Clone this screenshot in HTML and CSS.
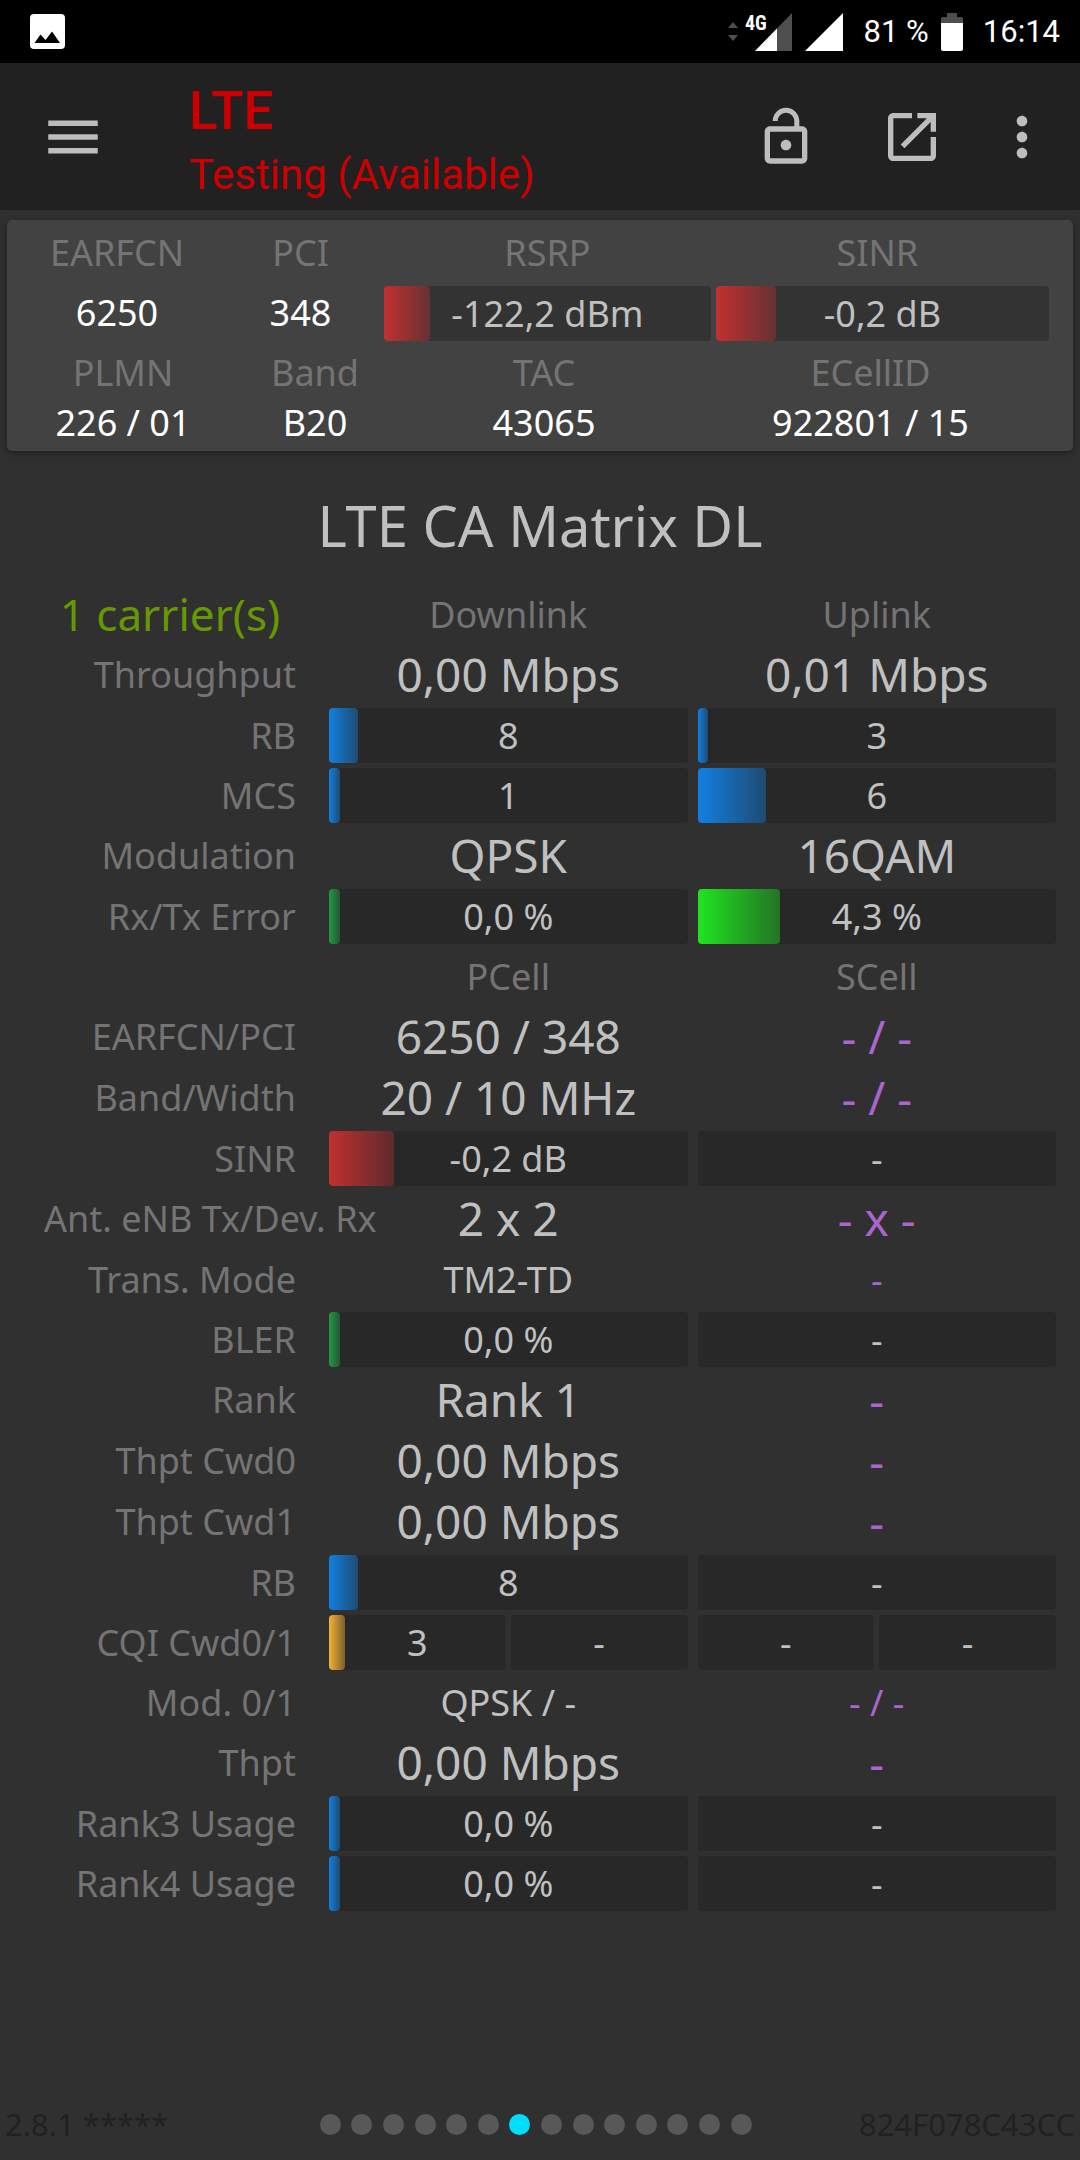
FILE: index.html
```html
<!DOCTYPE html>
<html lang="en">
<head>
  <meta charset="UTF-8">
  <meta name="viewport" content="width=device-width, initial-scale=1.0">
  <title>LTE CA Matrix DL</title>
  <link rel="stylesheet" href="styles.css">
</head>
<body>
  <!-- Status bar -->
  <div class="status-bar">
    <svg class="status-photo" viewBox="0 0 35 35">
      <rect width="35" height="35" rx="4" fill="#fff"/>
      <path d="M4.500 29L10.500 20.500L15.500 26L22 17.500L30 29z" fill="#000"/>
    </svg>
    <div class="status-right">
      <svg class="signal-data" viewBox="0 0 66 40">
        <path d="M1 16l5-6 5 6zM1 23h10l-5 6z" fill="#4e4e4e"/>
        <path d="M65 1v38H28z" fill="#4e4e4e"/>
        <path d="M50 16.500V39H28z" fill="#fff"/>
        <text x="18" y="18" class="signal-type">4G</text>
      </svg>
      <svg class="signal" viewBox="0 0 38 40"><path d="M38 1v38H0z" fill="#fff"/></svg>
      <span class="percent">81 %</span>
      <svg class="battery" viewBox="0 0 22 40">
        <path d="M6 1h10v4h4q2 0 2 2v4H0V7q0-2 2-2h4z" fill="#4e4e4e"/>
        <path d="M0 11h22v26q0 2-2 2H2q-2 0-2-2z" fill="#fff"/>
      </svg>
      <span class="clock">16:14</span>
    </div>
  </div>

  <!-- App bar -->
  <header class="app-bar">
    <button class="icon-btn menu-btn" aria-label="Menu">
      <svg viewBox="0 0 24 24"><path d="M3 18h18v-2H3v2zm0-5h18v-2H3v2zm0-7v2h18V6H3z"/></svg>
    </button>
    <div class="app-title">
      <div class="title">LTE</div>
      <div class="subtitle">Testing (Available)</div>
    </div>
    <button class="icon-btn" aria-label="Lock">
      <svg viewBox="0 0 24 24"><path d="M12 17c1.100 0 2-.9 2-2s-.9-2-2-2-2 .9-2 2 .9 2 2 2zm6-9h-1V6c0-2.760-2.240-5-5-5S7 3.240 7 6h1.900c0-1.710 1.390-3.100 3.100-3.100 1.710 0 3.100 1.390 3.100 3.100v2H6c-1.100 0-2 .9-2 2v10c0 1.100.9 2 2 2h12c1.100 0 2-.9 2-2V10c0-1.100-.9-2-2-2zm0 12H6V10h12v10z"/></svg>
    </button>
    <button class="icon-btn" aria-label="Open in new window">
      <svg viewBox="0 0 24 24"><path d="M19 19H5V5h7V3H5c-1.110 0-2 .9-2 2v14c0 1.100.89 2 2 2h14c1.100 0 2-.9 2-2v-7h-2v7zM14 3v2h3.590l-9.830 9.830 1.410 1.410L19 6.410V10h2V3h-7z"/></svg>
    </button>
    <button class="icon-btn more-btn" aria-label="More">
      <svg viewBox="0 0 24 24"><path d="M12 8c1.100 0 2-.9 2-2s-.9-2-2-2-2 .9-2 2 .9 2 2 2zm0 2c-1.100 0-2 .9-2 2s.9 2 2 2 2-.9 2-2-.9-2-2-2zm0 6c-1.100 0-2 .9-2 2s.9 2 2 2 2-.9 2-2-.9-2-2-2z"/></svg>
    </button>
  </header>

  <!-- Serving cell -->
  <section class="card">
    <table class="cell-table signal-table">
      <colgroup><col class="c-earfcn"><col class="c-pci"><col class="c-rsrp"><col></colgroup>
      <tr><th>EARFCN</th><th>PCI</th><th>RSRP</th><th>SINR</th></tr>
      <tr>
        <td>6250</td>
        <td>348</td>
        <td><div class="bar"><i class="fill red" style="width: 14%"></i><span>-122,2 dBm</span></div></td>
        <td><div class="bar"><i class="fill red" style="width: 18%"></i><span>-0,2 dB</span></div></td>
      </tr>
    </table>
    <table class="cell-table id-table">
      <colgroup><col class="c-plmn"><col class="c-band"><col class="c-tac"><col></colgroup>
      <tr><th>PLMN</th><th>Band</th><th>TAC</th><th>ECellID</th></tr>
      <tr><td>226 / 01</td><td>B20</td><td>43065</td><td>922801 / 15</td></tr>
    </table>
  </section>

  <!-- Carrier aggregation -->
  <main>
    <h1>LTE CA Matrix DL</h1>
    <div class="matrix">
      <table class="matrix-table">
        <colgroup><col class="c-label"><col><col></colgroup>
        <tr><th class="carriers">1 carrier(s)</th><th>Downlink</th><th>Uplink</th></tr>
        <tr class="big"><th>Throughput</th><td>0,00 Mbps</td><td>0,01 Mbps</td></tr>
        <tr>
          <th>RB</th>
          <td><div class="bar"><i class="fill blue" style="width: 8%"></i><span>8</span></div></td>
          <td><div class="bar"><i class="fill blue" style="width: 3%"></i><span>3</span></div></td>
        </tr>
        <tr>
          <th>MCS</th>
          <td><div class="bar"><i class="fill blue" style="width: 3%"></i><span>1</span></div></td>
          <td><div class="bar"><i class="fill blue" style="width: 19%"></i><span>6</span></div></td>
        </tr>
        <tr class="big"><th>Modulation</th><td>QPSK</td><td>16QAM</td></tr>
        <tr>
          <th>Rx/Tx Error</th>
          <td><div class="bar"><i class="fill green" style="width: 3%"></i><span>0,0 %</span></div></td>
          <td><div class="bar"><i class="fill lime" style="width: 23%"></i><span>4,3 %</span></div></td>
        </tr>
        <tr><th></th><th>PCell</th><th>SCell</th></tr>
        <tr class="big"><th>EARFCN/PCI</th><td>6250 / 348</td><td class="none">- / -</td></tr>
        <tr class="big"><th>Band/Width</th><td>20 / 10 MHz</td><td class="none">- / -</td></tr>
        <tr>
          <th>SINR</th>
          <td><div class="bar"><i class="fill red" style="width: 18%"></i><span>-0,2 dB</span></div></td>
          <td><div class="bar"><span>-</span></div></td>
        </tr>
        <tr class="big"><th>Ant. eNB Tx/Dev. Rx</th><td>2 x 2</td><td class="none">- x -</td></tr>
        <tr><th>Trans. Mode</th><td>TM2-TD</td><td class="none">-</td></tr>
        <tr>
          <th>BLER</th>
          <td><div class="bar"><i class="fill green" style="width: 3%"></i><span>0,0 %</span></div></td>
          <td><div class="bar"><span>-</span></div></td>
        </tr>
        <tr class="big"><th>Rank</th><td>Rank 1</td><td class="none">-</td></tr>
        <tr class="big"><th>Thpt Cwd0</th><td>0,00 Mbps</td><td class="none">-</td></tr>
        <tr class="big"><th>Thpt Cwd1</th><td>0,00 Mbps</td><td class="none">-</td></tr>
        <tr>
          <th>RB</th>
          <td><div class="bar"><i class="fill blue" style="width: 8%"></i><span>8</span></div></td>
          <td><div class="bar"><span>-</span></div></td>
        </tr>
        <tr>
          <th>CQI Cwd0/1</th>
          <td>
            <div class="pair">
              <div class="bar"><i class="fill orange" style="width: 9%"></i><span>3</span></div>
              <div class="bar"><span>-</span></div>
            </div>
          </td>
          <td>
            <div class="pair">
              <div class="bar"><span>-</span></div>
              <div class="bar"><span>-</span></div>
            </div>
          </td>
        </tr>
        <tr><th>Mod. 0/1</th><td>QPSK / -</td><td class="none">- / -</td></tr>
        <tr class="big"><th>Thpt</th><td>0,00 Mbps</td><td class="none">-</td></tr>
        <tr>
          <th>Rank3 Usage</th>
          <td><div class="bar"><i class="fill blue" style="width: 3%"></i><span>0,0 %</span></div></td>
          <td><div class="bar"><span>-</span></div></td>
        </tr>
        <tr>
          <th>Rank4 Usage</th>
          <td><div class="bar"><i class="fill blue" style="width: 3%"></i><span>0,0 %</span></div></td>
          <td><div class="bar"><span>-</span></div></td>
        </tr>
      </table>
    </div>
  </main>

  <footer class="footer">
    <span class="version">2.8.1 *****</span>
    <nav class="dots">
      <button aria-label="Page 1"></button>
      <button aria-label="Page 2"></button>
      <button aria-label="Page 3"></button>
      <button aria-label="Page 4"></button>
      <button aria-label="Page 5"></button>
      <button aria-label="Page 6"></button>
      <button class="active" aria-label="Page 7"></button>
      <button aria-label="Page 8"></button>
      <button aria-label="Page 9"></button>
      <button aria-label="Page 10"></button>
      <button aria-label="Page 11"></button>
      <button aria-label="Page 12"></button>
      <button aria-label="Page 13"></button>
      <button aria-label="Page 14"></button>
    </nav>
    <span class="device-id">824F078C43CC</span>
  </footer>
</body>
</html>
```

FILE: styles.css
```css
* {
  box-sizing: border-box;
}

body {
  margin: 0;
  min-height: 100vh;
  display: flex;
  flex-direction: column;
  background: #303030;
  color: #c0c0c0;
  font-family: "Noto Sans", sans-serif;
  font-size: 36px;
}

button {
  border: none;
  padding: 0;
  background: none;
  cursor: pointer;
}

svg {
  display: block;
}

/* Status bar */
.status-bar {
  display: flex;
  justify-content: space-between;
  align-items: center;
  height: 63px;
  padding: 0 20px 0 30px;
  background: #000;
  color: #fff;
  font-family: Roboto, sans-serif;
  font-size: 31px;
}

.status-photo {
  width: 35px;
  height: 35px;
}

.status-right {
  display: flex;
  align-items: center;
}

.signal-data {
  width: 66px;
  height: 40px;
}

.signal-type {
  font-family: "Roboto Condensed", Roboto, sans-serif;
  font-size: 20px;
  font-weight: bold;
  fill: #fff;
}

.signal {
  width: 38px;
  height: 40px;
  margin-left: 12px;
}

.percent {
  margin-left: 21px;
}

.battery {
  width: 22px;
  height: 40px;
  margin: 0 20px 0 12px;
}

/* App bar */
.app-bar {
  display: flex;
  align-items: center;
  height: 147px;
  padding: 0 11px 0 40px;
  background: #212121;
  color: #cc0000;
  font-family: Roboto, sans-serif;
}

.app-title {
  flex: 1;
  padding-top: 13px;
  line-height: 64px;
}

.title {
  font-size: 53px;
  font-weight: 500;
}

.subtitle {
  font-size: 42px;
}

.icon-btn {
  padding: 0 31px;
}

.icon-btn svg {
  width: 64px;
  height: 64px;
  fill: #bdbdbd;
}

.menu-btn {
  padding: 0 83px 0 0;
}

.menu-btn svg {
  width: 66px;
  height: 66px;
}

.more-btn {
  padding: 0 15px;
}

/* Tables */
table {
  width: 100%;
  table-layout: fixed;
  border-collapse: collapse;
}

th, td {
  padding: 0;
  text-align: center;
  white-space: nowrap;
}

th {
  color: #747474;
  font-weight: normal;
}

/* Bars */
.bar {
  display: grid;
  align-items: center;
  height: 55px;
  border-radius: 4px;
  background: #282828;
  color: #c0c0c0;
  line-height: 55px;
}

.bar .fill,
.bar span {
  grid-area: 1 / 1;
}

.fill {
  height: 55px;
  border-radius: 4px;
}

.red {
  background: linear-gradient(to right, #c23030, rgba(194, 48, 48, 0.35));
}

.blue {
  background: linear-gradient(to right, #1180e0, rgba(17, 128, 224, 0.4));
}

.green {
  background: linear-gradient(to right, #229a44, rgba(34, 154, 68, 0.4));
}

.lime {
  background: linear-gradient(to right, #20e420, rgba(32, 228, 32, 0.4));
}

.orange {
  background: linear-gradient(to right, #f5b335, rgba(245, 179, 53, 0.4));
}

.pair {
  display: flex;
  gap: 5px;
}

.pair .bar {
  flex: 1;
}

/* Serving cell card */
.card {
  margin: 10px 7px 0;
  padding: 3px 19px 8px 10px;
  border-radius: 5px;
  background: #424242;
  box-shadow: 0 2px 6px rgba(0, 0, 0, 0.4);
}

.cell-table {
  color: #fff;
  line-height: 40px;
}

.cell-table th {
  height: 60px;
}

.card .bar {
  background: #333;
}

.signal-table td {
  height: 60px;
}

.signal-table th:nth-child(n+3),
.signal-table td:nth-child(n+3) {
  padding-right: 5px;
}

.signal-table th:last-child {
  padding-right: 15px;
}

.c-earfcn {
  width: 200px;
}

.c-pci {
  width: 167px;
}

.c-rsrp {
  width: 32%;
}

.c-plmn {
  width: 212px;
}

.c-band {
  width: 172px;
}

.c-tac {
  width: 286px;
}

.id-table td {
  height: 40px;
}

/* Matrix */
.matrix {
  padding: 0 19px 0 44px;
}

h1 {
  margin: 40px 0 25px;
  color: #c0c0c0;
  font-size: 56px;
  font-weight: normal;
  line-height: 68px;
  text-align: center;
}

.c-label {
  width: 280px;
}

.matrix-table tr {
  height: 60px;
}

.matrix-table .big {
  height: 61px;
}

.matrix-table th,
.matrix-table td {
  padding: 0 5px;
  line-height: 55px;
}

.matrix-table th:first-child {
  padding: 0 28px 0 0;
  text-align: right;
}

.matrix-table .carriers:first-child {
  color: #669900;
  font-size: 44px;
  text-align: center;
}

.big td {
  font-size: 46px;
}

.none {
  color: #aa66cc;
}

/* Footer */
.footer {
  display: grid;
  grid-template-columns: 37fr 50fr 38fr;
  align-items: center;
  height: 72px;
  margin-top: auto;
  color: #212121;
  font-size: 31px;
}

.version {
  padding-left: 5px;
}

.device-id {
  padding-right: 5px;
  text-align: right;
}

.dots {
  display: flex;
  justify-content: space-between;
}

.dots button {
  width: 21px;
  height: 21px;
  border-radius: 50%;
  background: #585858;
}

.dots .active {
  background: #00ddff;
}
```
